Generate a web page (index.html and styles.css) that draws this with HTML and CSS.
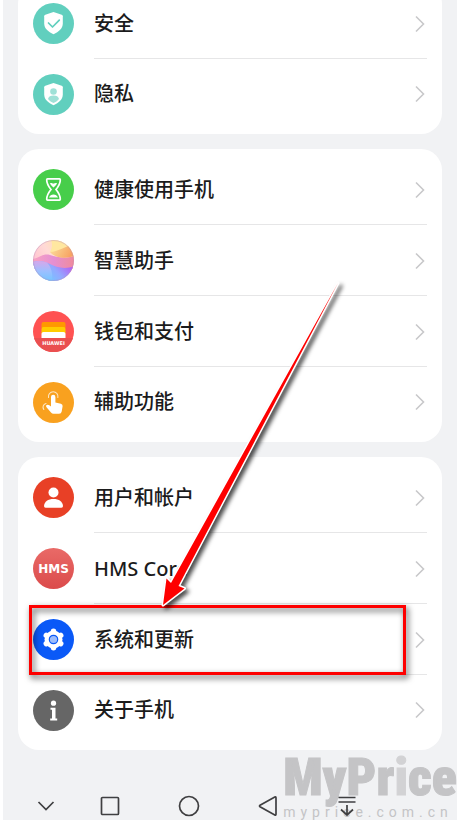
FILE: index.html
```
<!DOCTYPE html>
<html lang="zh-CN">
<head>
  <meta charset="UTF-8">
  <meta name="viewport" content="width=device-width, initial-scale=1.0">
  <title>设置</title>
  <link rel="stylesheet" href="styles.css">
</head>
<body>
  <div class="screen">

    <main class="settings">
      <ul class="card">
        <li class="row">
          <a href="#security">
            <svg class="icon" viewBox="0 0 41 41">
              <circle cx="20.5" cy="20.5" r="20.5" fill="#61cfbe"/>
              <path d="M20.5 9l8.2 2.8q1.1.4 1.1 1.5v7.2c0 5-4 8.3-9.3 10.7-5.3-2.4-9.3-5.7-9.3-10.7v-7.2q0-1.1 1.1-1.5z" fill="#fff"/>
              <path d="M15.5 20l4 4 6.8-6.8" fill="none" stroke="#61cfbe" stroke-width="1.7" stroke-linecap="round" stroke-linejoin="round"/>
            </svg>
            <span class="label">安全</span>
            <svg class="chevron" viewBox="0 0 14 18"><path d="M3 1.5l7.5 7.5L3 16.5"/></svg>
          </a>
        </li>
        <li class="row">
          <a href="#privacy">
            <svg class="icon" viewBox="0 0 41 41">
              <circle cx="20.5" cy="20.5" r="20.5" fill="#61cfbe"/>
              <path d="M20.5 9l8.2 2.8q1.1.4 1.1 1.5v7.2c0 5-4 8.3-9.3 10.7-5.3-2.4-9.3-5.7-9.3-10.7v-7.2q0-1.1 1.1-1.5z" fill="#fff"/>
              <circle cx="20.5" cy="17.5" r="3.3" fill="#9fe1d7"/>
              <path d="M15 25c.5-2.500 2.500-3.500 5.500-3.500s5 1 5.500 3.500c-1.500 2-3.500 3.200-5.500 4-2-.8-4-2-5.500-4z" fill="#9fe1d7"/>
            </svg>
            <span class="label">隐私</span>
            <svg class="chevron" viewBox="0 0 14 18"><path d="M3 1.5l7.5 7.5L3 16.5"/></svg>
          </a>
        </li>
      </ul>

      <ul class="card">
        <li class="row">
          <a href="#digital-balance">
            <svg class="icon" viewBox="0 0 41 41">
              <circle cx="20.5" cy="20.5" r="20.5" fill="#47ce4a"/>
              <path d="M14.5 9.8h12q.8 0 .8.9c0 4.500-2 7-4.300 9.800 2.300 2.800 4.300 5.300 4.300 9.800q0 .9-.8.900h-12q-.8 0-.8-.9c0-4.500 2-7 4.300-9.800-2.300-2.800-4.300-5.300-4.300-9.800q0-.9.800-.900z" fill="none" stroke="#fff" stroke-width="1.7"/>
              <path d="M17 14.300c1.500-.9 2.500.7 3.700.3s2-.8 3.300-.3c-.6 1.700-2 3-3.500 4.300-1.500-1.300-2.900-2.600-3.500-4.300zM16 28.500c.8-2 2.500-3 4.500-3s3.700 1 4.500 3z" fill="#fff"/>
            </svg>
            <span class="label">健康使用手机</span>
            <svg class="chevron" viewBox="0 0 14 18"><path d="M3 1.5l7.5 7.5L3 16.5"/></svg>
          </a>
        </li>
        <li class="row">
          <a href="#assistant">
            <svg class="icon" viewBox="0 0 41 41">
              <defs>
                <linearGradient id="sky" x1="0" y1="0.6" x2="0.9" y2="0">
                  <stop offset="0" stop-color="#ffc0d0"/>
                  <stop offset="0.45" stop-color="#ffdad6"/>
                  <stop offset="1" stop-color="#ffe39a"/>
                </linearGradient>
                <linearGradient id="sun" x1="0" y1="0" x2="1" y2="0.3">
                  <stop offset="0" stop-color="#fbe29f"/>
                  <stop offset="1" stop-color="#f8a463"/>
                </linearGradient>
                <linearGradient id="hill" x1="0" y1="0" x2="1" y2="0">
                  <stop offset="0" stop-color="#f8a3c2"/>
                  <stop offset="0.5" stop-color="#e58fd2"/>
                  <stop offset="1" stop-color="#f08b9c"/>
                </linearGradient>
                <linearGradient id="sea" gradientUnits="userSpaceOnUse" x1="16" y1="41" x2="36" y2="22">
                  <stop offset="0" stop-color="#74c6ff"/>
                  <stop offset="0.45" stop-color="#94a8ff"/>
                  <stop offset="1" stop-color="#b855f2"/>
                </linearGradient>
                <linearGradient id="foam" x1="0" y1="0" x2="0" y2="1">
                  <stop offset="0" stop-color="#d9a6ea"/>
                  <stop offset="0.5" stop-color="#9ebfff"/>
                  <stop offset="1" stop-color="#74c6ff"/>
                </linearGradient>
                <clipPath id="ball"><circle cx="20.5" cy="20.5" r="20.5"/></clipPath>
              </defs>
              <g clip-path="url(#ball)">
                <path d="M0 0h41v41H0z" fill="url(#sky)"/>
                <path d="M18 0h23v8c-9 1-15 5-24 4 2-4 3-8 1-12z" fill="#ffe7a0"/>
                <path d="M0 19c6-1 10-6 17-4s14 4 24 1v16H0z" fill="url(#hill)"/>
                <path d="M17 12c8 0 14-6 24-7v11c-10 3-19 2-24-4z" fill="url(#sun)"/>
                <path d="M0 22c5-2 11-1 17 2s15 6 24 2v15H0z" fill="url(#sea)"/>
                <path d="M0 22c5-2 10-1 14 .5 4 4 6 11 5 18.500H0z" fill="url(#foam)"/>
              </g>
              <circle cx="20.5" cy="20.5" r="20" fill="none" stroke="#b98fc0" stroke-opacity="0.4"/>
            </svg>
            <span class="label">智慧助手</span>
            <svg class="chevron" viewBox="0 0 14 18"><path d="M3 1.5l7.5 7.5L3 16.5"/></svg>
          </a>
        </li>
        <li class="row">
          <a href="#wallet">
            <svg class="icon" viewBox="0 0 41 41">
              <circle cx="20.5" cy="20.5" r="20.5" fill="#ff5252"/>
              <path d="M1 27h39a20.5 20.5 0 0 1-39 0z" fill="#ea4f50"/>
              <path d="M8.5 13q0-2 2-2h20q2 0 2 2v4h-24z" fill="#ff9800"/>
              <path d="M8.5 18q0-2 2-2h20q2 0 2 2v5h-24z" fill="#ffcc00"/>
              <path d="M8.5 23q0-2 2-2h20q2 0 2 2v4h-24z" fill="#fff"/>
              <text class="wallet-text" x="20.5" y="34" text-anchor="middle">HUAWEI</text>
            </svg>
            <span class="label">钱包和支付</span>
            <svg class="chevron" viewBox="0 0 14 18"><path d="M3 1.5l7.5 7.5L3 16.5"/></svg>
          </a>
        </li>
        <li class="row">
          <a href="#accessibility">
            <svg class="icon" viewBox="0 0 41 41">
              <circle cx="20.5" cy="20.5" r="20.5" fill="#f9a11f"/>
              <path d="M18 15a2.2 2.2 0 0 1 4.4 0v5.5l5.500 1.200q2 .5 1.700 2.500l-.9 5.300q-.4 2.300-2.600 2.300h-5.600q-1.500 0-2.500-1.200l-4.700-5.600q-.8-1.300.4-2 1.300-.7 2.600.3l1.700 1.100z" fill="#fff"/>
              <path d="M15.5 15.5a4.8 4.8 0 1 1 9.400 0M13 21.500c-2.800.8-3.800 3.500-2.200 6" fill="none" stroke="#fff" stroke-opacity="0.75" stroke-width="1.1" stroke-linecap="round"/>
            </svg>
            <span class="label">辅助功能</span>
            <svg class="chevron" viewBox="0 0 14 18"><path d="M3 1.5l7.5 7.5L3 16.5"/></svg>
          </a>
        </li>
      </ul>

      <ul class="card">
        <li class="row">
          <a href="#users">
            <svg class="icon" viewBox="0 0 41 41">
              <circle cx="20.5" cy="20.5" r="20.5" fill="#e84026"/>
              <circle cx="20.5" cy="15.5" r="5" fill="#fff"/>
              <path d="M11 29c.5-4.800 4-7 9.500-7s9 2.200 9.500 7q0 1.800-1.600 1.800H12.600Q11 30.800 11 29z" fill="#fff"/>
            </svg>
            <span class="label">用户和帐户</span>
            <svg class="chevron" viewBox="0 0 14 18"><path d="M3 1.5l7.5 7.5L3 16.5"/></svg>
          </a>
        </li>
        <li class="row">
          <a href="#hms">
            <svg class="icon" viewBox="0 0 41 41">
              <defs>
                <linearGradient id="hms" x1="0" y1="0" x2="0" y2="1">
                  <stop offset="0" stop-color="#e96a67"/>
                  <stop offset="1" stop-color="#db4b4b"/>
                </linearGradient>
              </defs>
              <circle cx="20.5" cy="20.5" r="20.5" fill="url(#hms)"/>
              <text class="hms-text" x="20.5" y="25" text-anchor="middle">HMS</text>
            </svg>
            <span class="label">HMS Core</span>
            <svg class="chevron" viewBox="0 0 14 18"><path d="M3 1.5l7.5 7.5L3 16.5"/></svg>
          </a>
        </li>
        <li class="row marked">
          <a href="#system">
            <svg class="icon" viewBox="0 0 41 41">
              <circle cx="20.5" cy="20.5" r="20.5" fill="#0a59f7"/>
              <circle cx="20.5" cy="20.5" r="9" fill="#fff"/>
              <path d="M20.5 12.2v16.6M13.3 16.3l14.4 8.4M27.7 16.3l-14.4 8.4" stroke="#fff" stroke-width="5.5" stroke-linecap="round"/>
              <circle cx="20.5" cy="20.5" r="4.2" fill="#9dbdfc" stroke="#0a59f7" stroke-width="1.2"/>
            </svg>
            <span class="label">系统和更新</span>
            <svg class="chevron" viewBox="0 0 14 18"><path d="M3 1.5l7.5 7.5L3 16.5"/></svg>
          </a>
        </li>
        <li class="row">
          <a href="#about">
            <svg class="icon" viewBox="0 0 41 41">
              <circle cx="20.5" cy="20.5" r="20.5" fill="#666"/>
              <circle cx="20.5" cy="13.2" r="2.6" fill="#fff"/>
              <path d="M17.5 17.8h5v10.8h1.700v1.900h-7v-1.900h1.800v-8.900h-1.500z" fill="#fff"/>
            </svg>
            <span class="label">关于手机</span>
            <svg class="chevron" viewBox="0 0 14 18"><path d="M3 1.5l7.5 7.5L3 16.5"/></svg>
          </a>
        </li>
      </ul>
    </main>

    <!-- Navigation bar -->
    <nav class="navbar">
      <button type="button" aria-label="收起"><svg viewBox="0 0 22 22"><path d="M3.5 7l7.5 7.5L18.5 7"/></svg></button>
      <button type="button" aria-label="最近任务"><svg viewBox="0 0 22 22"><rect x="2.5" y="2.5" width="17" height="17" rx="1"/></svg></button>
      <button type="button" aria-label="主页"><svg viewBox="0 0 22 22"><circle cx="11" cy="11" r="9.5"/></svg></button>
      <button type="button" aria-label="返回"><svg viewBox="0 0 22 22"><path d="M3 10.3L17.8 2q1.2-.5 1.2 1v16q0 1.5-1.2 1L3 11.7q-1-.7 0-1.4z"/></svg></button>
      <button type="button" aria-label="通知"><svg viewBox="0 0 22 22"><path d="M2.500 2.500h17M2.500 7h17M11 10v10M5 14.500l6 5.500 6-5.500"/></svg></button>
    </nav>

    <div class="watermark">
      <div class="watermark-name">MyPr<span>i</span>ce</div>
      <div class="watermark-url">myprice.com.cn</div>
    </div>

    <svg class="arrow" viewBox="0 0 200 340">
      <path d="M17 325L20.500 298.500 25 303 192 3 32.500 306 38.500 308.500z"/>
    </svg>
  </div>
</body>
</html>
```

FILE: styles.css
```
* {
  box-sizing: border-box;
}
body {
  margin: 0;
  background-color: #fff;
  font-family: "Noto Sans", "Noto Sans CJK SC", sans-serif;
  color: #1b1b1c;
}
.screen {
  position: relative;
  display: flex;
  flex-direction: column;
  min-height: 100vh;
  margin: 0 1px 0 3px;
  background-color: #f1f2f4;
  overflow: hidden;
}

/* Cards */
.settings {
  display: flex;
  flex-direction: column;
  gap: 15px;
  margin-top: -17px; /* list is scrolled under the top edge */
  padding: 0 15px;
}
.card {
  list-style: none;
  margin: 0;
  padding: 5px 15px;
  background-color: #fff;
  border-radius: 21px;
}
.row {
  position: relative;
}
.row a {
  display: grid;
  grid-template-columns: 41px 1fr 14px;
  column-gap: 20px;
  align-items: center;
  height: 71px;
  color: inherit;
  text-decoration: none;
  background: linear-gradient(#e6e6e7, #e6e6e7) 61px 100% / 100% 1px no-repeat;
}
.row:last-child a {
  height: 70px;
  background: none;
}
.icon {
  display: block;
  width: 41px;
  height: 41px;
}
.label {
  font-size: 20px;
  font-weight: 500;
  line-height: 28px;
}
.chevron {
  width: 14px;
  height: 18px;
  fill: none;
  stroke: #c8c8ca;
  stroke-width: 1.6;
}
.wallet-text {
  font-family: "DejaVu Sans", sans-serif;
  font-size: 5px;
  font-weight: 700;
  fill: #fff;
}
.hms-text {
  font-family: "DejaVu Sans", sans-serif;
  font-size: 12px;
  font-weight: 700;
  fill: #fff;
}

/* Red frame around the row */
.marked::after {
  content: "";
  position: absolute;
  top: 1px;
  right: 21px;
  bottom: 0;
  left: -4px;
  border: 3px solid #fe0000;
  filter: drop-shadow(2px 3px 3px rgba(0, 0, 0, 0.7));
  pointer-events: none;
}
.arrow {
  position: absolute;
  top: 280px;
  left: 143px;
  width: 200px;
  height: 340px;
  fill: #fe0000;
  stroke: #fff;
  stroke-width: 3;
  stroke-linejoin: round;
  paint-order: stroke;
  filter: drop-shadow(3px 3px 2px rgba(0, 0, 0, 0.7));
  pointer-events: none;
}

/* Navigation */
.navbar {
  position: relative;
  z-index: 1;
  display: grid;
  grid-template-columns: 48fr repeat(4, 79fr);
  margin-top: auto;
  padding: 0 70px 3px 19px;
}
.navbar button {
  display: flex;
  justify-content: center;
  padding: 0;
  border: none;
  background: none;
  cursor: pointer;
}
.navbar svg {
  width: 22px;
  height: 22px;
  fill: none;
  stroke: #3f3f41;
  stroke-width: 1.7;
}

/* Watermark */
.watermark {
  position: absolute;
  right: 0;
  bottom: 0;
  color: #c4c4c6;
  white-space: nowrap;
}
.watermark-name {
  font-family: "Roboto Condensed", "Liberation Sans", sans-serif;
  font-size: 52px;
  font-weight: 900;
  line-height: 52px;
  -webkit-text-stroke: 1px;
}
.watermark-name span {
  color: #d2d2d4;
}
.watermark-url {
  font-family: Roboto, sans-serif;
  font-size: 14px;
  line-height: 16px;
  letter-spacing: 5px;
}
```
